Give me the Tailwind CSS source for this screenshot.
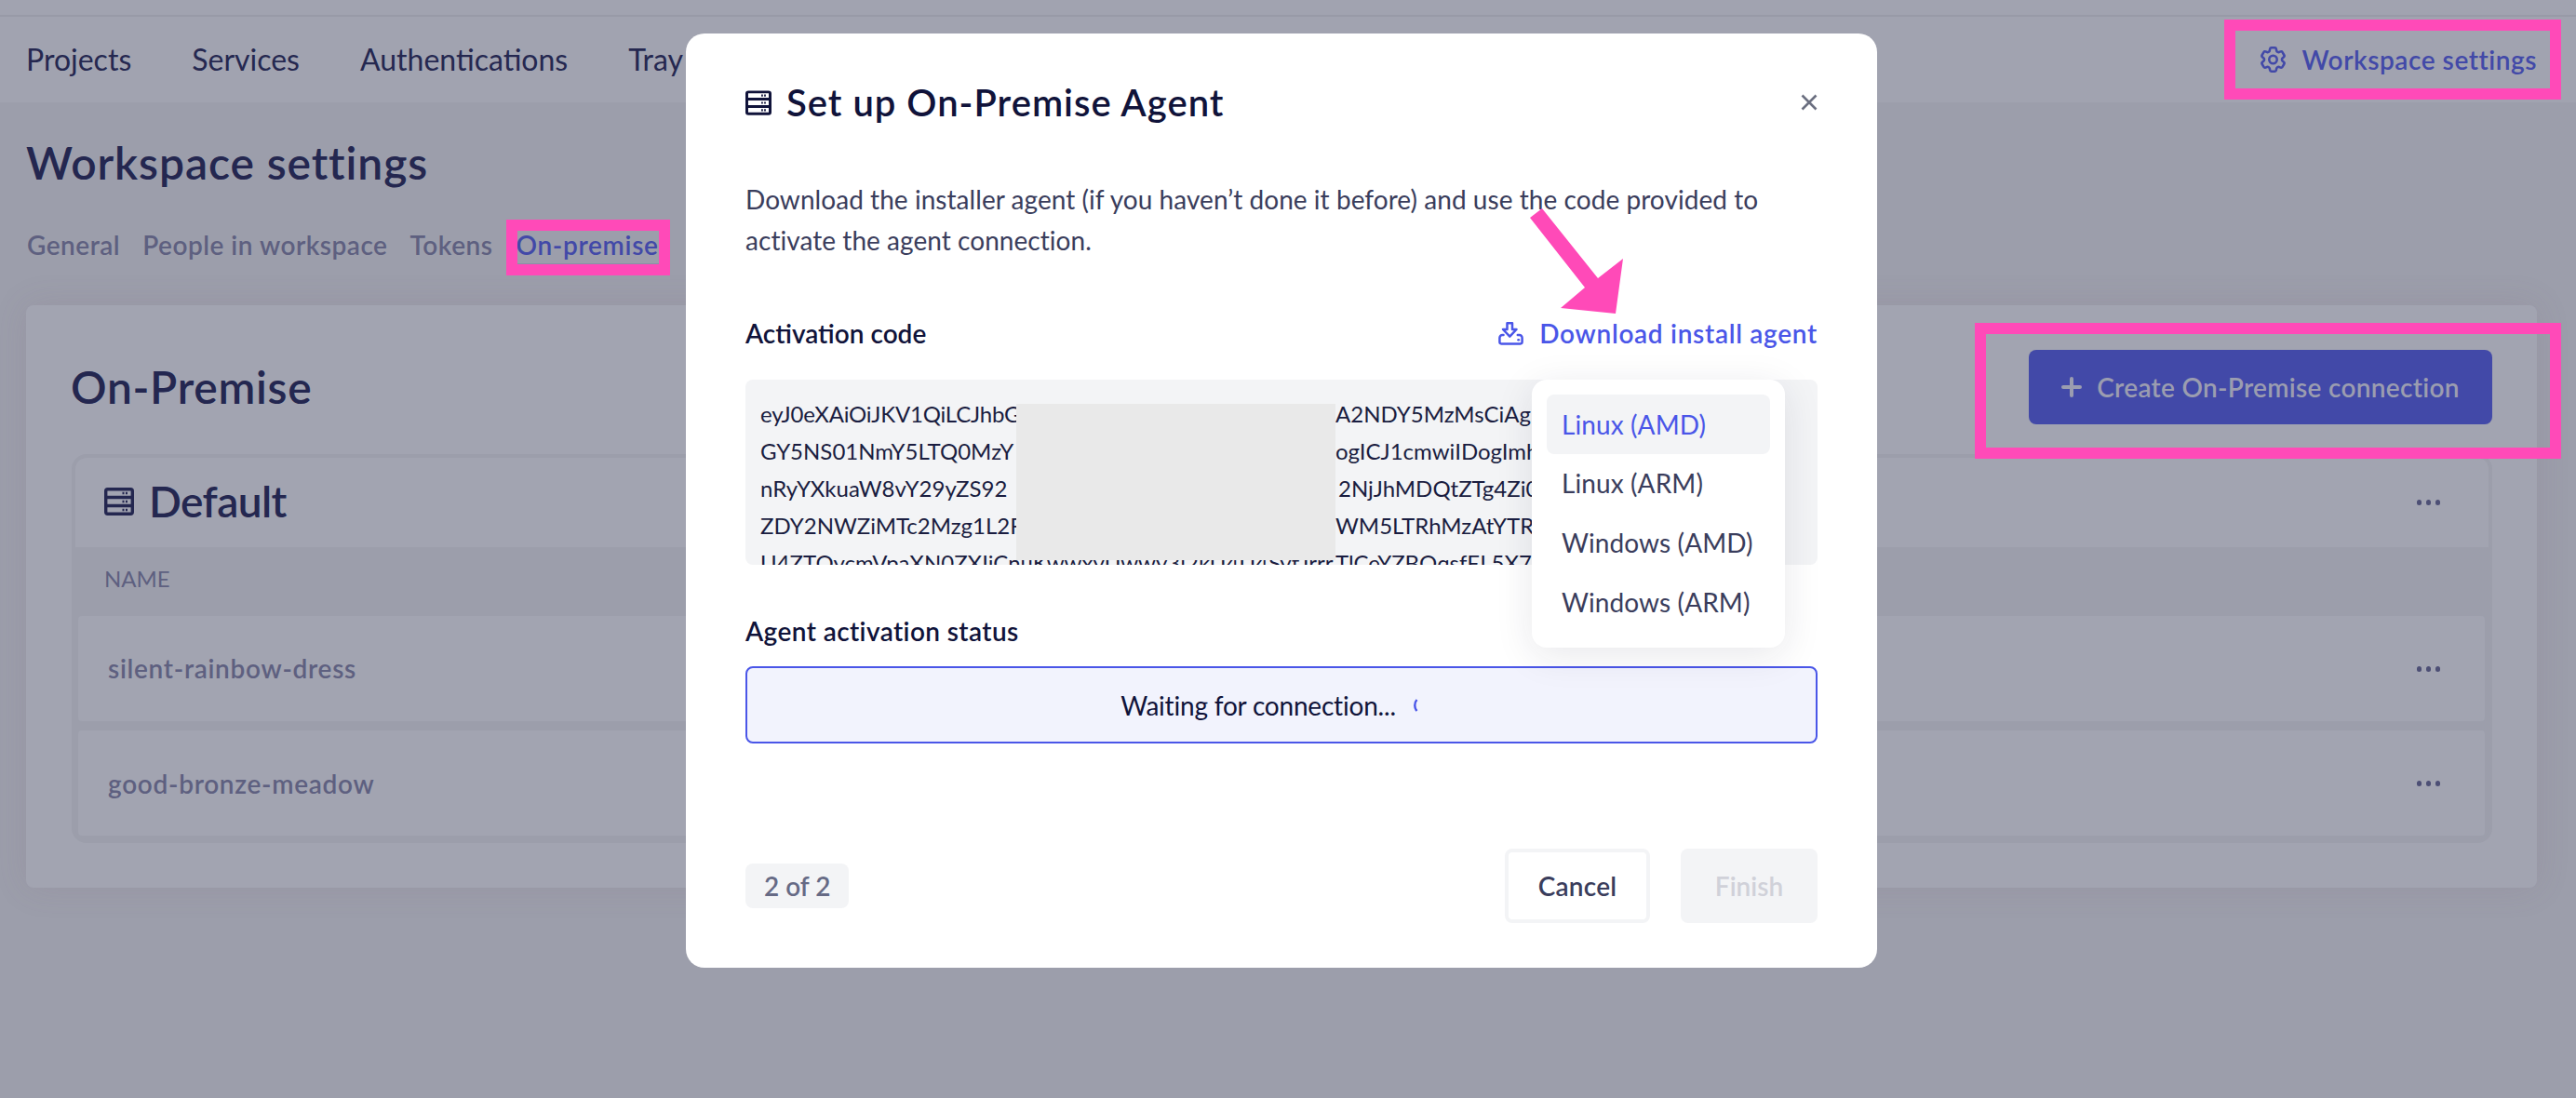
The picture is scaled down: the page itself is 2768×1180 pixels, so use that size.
<!DOCTYPE html>
<html lang="en">
<head>
    <meta charset="UTF-8">
    <title>Set up On-Premise Agent</title>
    <script src="https://cdn.jsdelivr.net/npm/@tailwindcss/browser@4"></script>
</head>
<body class="relative w-[2768px] h-[1180px] overflow-hidden bg-[#9c9eab] [font-family:Lato,sans-serif]">

    <!-- page behind the dialog -->
    <div class="h-[18px] bg-[#a1a3b0] border-b-2 border-[#989aa7]"></div>
    <nav class="h-[92px] bg-[#a1a3b0] flex items-center justify-between pl-[28px] pr-[42px] text-[32px] text-[#252850]">
        <div class="flex gap-[65px]">
            <span>Projects</span>
            <span>Services</span>
            <span>Authentications</span>
            <span>Tray</span>
        </div>
        <div class="flex items-center gap-[17px] text-[#4249a8] text-[28px] font-semibold tracking-[0.55px]">
            <svg class="w-[27px] h-[28px]" viewBox="2.4 2.2 19.2 19.6" fill="none" stroke="currentColor" stroke-width="1.8">
                <path d="M9.594 3.94c.09-.542.56-.94 1.11-.94h2.593c.55 0 1.02.398 1.11.94l.213 1.281c.063.374.313.686.645.87.074.04.147.083.22.127.325.196.72.257 1.075.124l1.217-.456a1.125 1.125 0 0 1 1.37.49l1.296 2.247a1.125 1.125 0 0 1-.26 1.431l-1.003.827c-.293.241-.438.613-.43.992a7.723 7.723 0 0 1 0 .255c-.008.378.137.75.43.991l1.004.827c.424.35.534.955.26 1.43l-1.298 2.247a1.125 1.125 0 0 1-1.369.491l-1.217-.456c-.355-.133-.75-.072-1.076.124a6.47 6.47 0 0 1-.22.128c-.331.183-.581.495-.644.869l-.213 1.281c-.09.543-.56.94-1.11.94h-2.594c-.55 0-1.019-.398-1.11-.94l-.213-1.281c-.062-.374-.312-.686-.644-.87a6.52 6.52 0 0 1-.22-.127c-.325-.196-.72-.257-1.076-.124l-1.217.456a1.125 1.125 0 0 1-1.369-.49l-1.297-2.247a1.125 1.125 0 0 1 .26-1.431l1.004-.827c.292-.24.437-.613.43-.991a6.932 6.932 0 0 1 0-.255c.007-.38-.138-.751-.43-.992l-1.004-.827a1.125 1.125 0 0 1-.26-1.43l1.297-2.247a1.125 1.125 0 0 1 1.37-.491l1.216.456c.356.133.751.072 1.076-.124.072-.044.146-.086.22-.128.332-.183.582-.495.644-.869l.214-1.28Z"/>
                <circle cx="12" cy="12" r="3"/>
            </svg>
            <span>Workspace settings</span>
        </div>
    </nav>

    <main class="pl-[28px] pr-[42px]">
        <h1 class="pt-[40px] text-[48px] leading-[50px] font-semibold text-[#242750] tracking-[0.9px]">Workspace settings</h1>
        <div class="mt-[43px] pl-px flex text-[28px] leading-[40px] font-semibold text-[#5e6080] tracking-[0.5px]">
            <span>General</span>
            <span class="ml-[24px]">People in workspace</span>
            <span class="ml-[24px]">Tokens</span>
            <span class="ml-[25px] text-[#4249a8] tracking-[0.7px] shadow-[0_3px_0_#8c8ea6]">On-premise</span>
        </div>

        <section class="mt-[45px] bg-[#a2a4b1] rounded-lg pt-[48px] pb-[48px] pl-[49px] pr-[48px] shadow-[0_0_36px_rgba(120,90,110,0.14)]">
            <div class="h-[80px] flex items-center justify-between">
                <h2 class="-ml-px text-[48px] font-semibold text-[#242750] tracking-[0.7px]">On-Premise</h2>
                <button class="w-[498px] h-[80px] rounded-lg bg-[#4249a8] flex items-center justify-center gap-[16px] text-[28px] font-semibold text-[#9b9db0] tracking-[0.3px]">
                    <svg class="w-[22px] h-[22px]" viewBox="0 0 22 22" fill="none" stroke="currentColor" stroke-width="4" stroke-linecap="round"><path d="M11 2v18M2 11h18"/></svg>
                    Create On-Premise connection
                </button>
            </div>

            <div class="mt-[32px] border-4 border-[#9c9eab] rounded-2xl bg-[#9c9eab] overflow-hidden">
                <div class="h-[96px] bg-[#a2a4b1] flex items-center justify-between pl-[31px] pr-[52px]">
                    <div class="flex items-center gap-[16px] text-[46px] leading-[50px] pb-[2px] font-semibold text-[#242750] tracking-[-0.6px]">
                        <svg class="w-[32px] h-[30px]" viewBox="0 0 32 30" fill="none" stroke="currentColor" stroke-width="3.4">
                            <rect x="1.7" y="1.7" width="28.6" height="26.6" rx="2"/>
                            <path d="M1.7 10.5h28.6M1.7 19.5h28.6"/>
                            <path d="M19.5 6h2M23 6h2M19.5 15h2M23 15h2M19.5 24h2M23 24h2" stroke-width="2.4"/>
                        </svg>
                        Default
                    </div>
                    <div class="flex gap-[5px]">
                        <i class="w-[5px] h-[6px] rounded-full bg-[#4d4f75]"></i><i class="w-[5px] h-[6px] rounded-full bg-[#4d4f75]"></i><i class="w-[5px] h-[6px] rounded-full bg-[#4d4f75]"></i>
                    </div>
                </div>
                <div class="h-[74px] flex items-center pl-[31px] pb-[7px] text-[24px] text-[#5e6080]">NAME</div>
                <div class="pl-[3px] pr-[4px] pb-[4px] flex flex-col gap-[10px]">
                    <div class="h-[113px] rounded bg-[#a2a4b1] flex items-center justify-between pl-[32px] pr-[48px] text-[28px] font-semibold text-[#5e6080] tracking-[0.7px]">
                        <span class="pb-[2px]">silent-rainbow-dress</span>
                        <div class="flex gap-[5px]">
                            <i class="w-[5px] h-[6px] rounded-full bg-[#4d4f75]"></i><i class="w-[5px] h-[6px] rounded-full bg-[#4d4f75]"></i><i class="w-[5px] h-[6px] rounded-full bg-[#4d4f75]"></i>
                        </div>
                    </div>
                    <div class="h-[113px] rounded bg-[#a2a4b1] flex items-center justify-between pl-[32px] pr-[48px] text-[28px] font-semibold text-[#5e6080] tracking-[0.7px]">
                        <span>good-bronze-meadow</span>
                        <div class="flex gap-[5px]">
                            <i class="w-[5px] h-[6px] rounded-full bg-[#4d4f75]"></i><i class="w-[5px] h-[6px] rounded-full bg-[#4d4f75]"></i><i class="w-[5px] h-[6px] rounded-full bg-[#4d4f75]"></i>
                        </div>
                    </div>
                </div>
            </div>
        </section>
    </main>

    <!-- pink annotation boxes -->
    <div class="absolute left-[544px] top-[236px] w-[176px] h-[60px] border-[12px] border-[#ff4ab8]"></div>
    <div class="absolute left-[2390px] top-[21px] w-[362px] h-[86px] border-[12px] border-[#ff4ab8]"></div>
    <div class="absolute left-[2122px] top-[347px] w-[630px] h-[146px] border-[12px] border-[#ff4ab8]"></div>

    <!-- dialog -->
    <div class="absolute left-[737px] top-[36px] w-[1280px] h-[1004px] bg-white rounded-[20px] px-[64px] pt-[50px]">
        <div class="h-[48px] flex items-center justify-between">
            <div class="flex items-center gap-[16px] text-[40px] font-semibold text-[#10133a] tracking-[1px]">
                <svg class="w-[28px] h-[27px]" viewBox="0 0 32 30" fill="none" stroke="currentColor" stroke-width="3.4">
                    <rect x="1.7" y="1.7" width="28.6" height="26.6" rx="2"/>
                    <path d="M1.7 10.5h28.6M1.7 19.5h28.6"/>
                    <path d="M19.5 6h2M23 6h2M19.5 15h2M23 15h2M19.5 24h2M23 24h2" stroke-width="2.4"/>
                </svg>
                Set up On-Premise Agent
            </div>
            <svg class="w-[18px] h-[18px] text-[#6b6f80]" viewBox="0 0 18 18" fill="none" stroke="currentColor" stroke-width="2.6"><path d="M1.5 1.5l15 15M16.5 1.5l-15 15"/></svg>
        </div>

        <p class="mt-[58px] text-[28px] leading-[44px] text-[#3a3d5c] tracking-[0.05px]">Download the installer agent (if you haven’t done it before) and use the code provided to<br>activate the agent connection.</p>

        <div class="mt-[58px] h-[40px] flex items-center justify-between text-[28px] font-semibold">
            <span class="text-[#10133a]">Activation code</span>
            <span class="flex items-center gap-[17px] text-[#4a56e8] tracking-[0.7px]">
                <svg class="w-[27px] h-[25px]" viewBox="0 0 27 25" fill="none" stroke="currentColor" stroke-width="2.5" stroke-linejoin="round" stroke-linecap="round">
                    <path d="M9.5 1.3h5.5V8h4.5l-7.2 7.6L5 8h4.5Z"/>
                    <path d="M5.5 14H4.4a3 3 0 0 0-3 3v4.6a1.8 1.8 0 0 0 1.8 1.8h20.6a1.8 1.8 0 0 0 1.8-1.8V17a3 3 0 0 0-3-3h-1.8"/>
                    <path d="M21.5 19.3h.4"/>
                </svg>
                Download install agent
            </span>
        </div>

        <div class="relative mt-[30px] h-[199px] bg-[#f3f4f6] rounded-lg overflow-hidden pl-[16px] pt-[17px] text-[24px] leading-[40px] text-[#1a1d40] whitespace-nowrap">
            <div class="flex"><span class="w-[618px] overflow-hidden tracking-[-0.2px]">eyJ0eXAiOiJKV1QiLCJhbG</span><span>A2NDY5MzMsCiAg</span></div>
            <div class="flex"><span class="w-[618px] overflow-hidden">GY5NS01NmY5LTQ0MzY</span><span>ogICJ1cmwiIDogImh</span></div>
            <div class="flex"><span class="w-[621px] overflow-hidden">nRyYXkuaW8vY29yZS92</span><span>2NjJhMDQtZTg4Zi0</span></div>
            <div class="flex"><span class="w-[618px] overflow-hidden">ZDY2NWZiMTc2Mzg1L2F</span><span>WM5LTRhMzAtYTR</span></div>
            <div class="flex"><span class="w-[618px] overflow-hidden">U4ZTQycmVpaXN0ZXIiCnuKwwxyUwwy3i2kU4U4SytJrrr</span><span>TlCeYZBQqsfEL5X7</span></div>
            <div class="absolute left-[291px] top-[26px] w-[343px] h-[168px] bg-[#e9e9e9]"></div>
        </div>

        <div class="mt-[51px] h-[40px] flex items-center text-[28px] font-semibold text-[#10133a] tracking-[0.4px]">Agent activation status</div>
        <div class="mt-[18px] h-[83px] rounded-lg border-2 border-[#4a56e8] bg-[#f2f3fd] flex items-center justify-center gap-[18px] text-[28px] text-[#10133a]">
            <span class="tracking-[-0.2px]">Waiting for connection...</span>
            <svg class="w-[32px] h-[14px] text-[#4a56e8]" viewBox="0 0 32 14" fill="none" stroke="currentColor" stroke-width="2.4"><path d="M4.5 1C1.5 4 1.5 10 4.5 13"/></svg>
        </div>

        <div class="mt-[113px] h-[80px] flex items-center justify-between text-[28px] font-semibold">
            <span class="h-[48px] px-[20px] rounded-lg bg-[#f3f4f6] flex items-center text-[#666a85]">2 of 2</span>
            <div class="flex gap-[33px]">
                <button class="w-[156px] h-[80px] rounded-lg border-4 border-[#f3f4f6] text-[#3a3d5c] tracking-[0.2px]">Cancel</button>
                <button class="w-[147px] h-[80px] rounded-lg bg-[#f3f4f6] text-[#d0d1d9]">Finish</button>
            </div>
        </div>

        <!-- platform menu -->
        <div class="absolute left-[909px] top-[372px] w-[272px] h-[288px] rounded-2xl bg-white p-[16px] text-[28px] text-[#3a3d5c] tracking-[0.1px] shadow-[0_8px_40px_rgba(30,30,60,0.10)]">
            <div class="h-[64px] rounded-lg bg-[#f3f4f6] flex items-center px-[16px] text-[#4a56e8]">Linux (AMD)</div>
            <div class="h-[64px] flex items-center px-[16px] pb-[2px]">Linux (ARM)</div>
            <div class="h-[64px] flex items-center px-[16px] pb-[2px]">Windows (AMD)</div>
            <div class="h-[64px] flex items-center px-[16px] pb-[2px]">Windows (ARM)</div>
        </div>
    </div>

    <!-- pink arrow -->
    <svg class="absolute left-0 top-0 w-[2768px] h-[1180px] pointer-events-none" viewBox="0 0 2768 1180">
        <polygon fill="#ff4ab8" points="1657,224 1644,234 1703,309 1677,331 1736,337 1744,278 1717,299"/>
    </svg>
</body>
</html>
